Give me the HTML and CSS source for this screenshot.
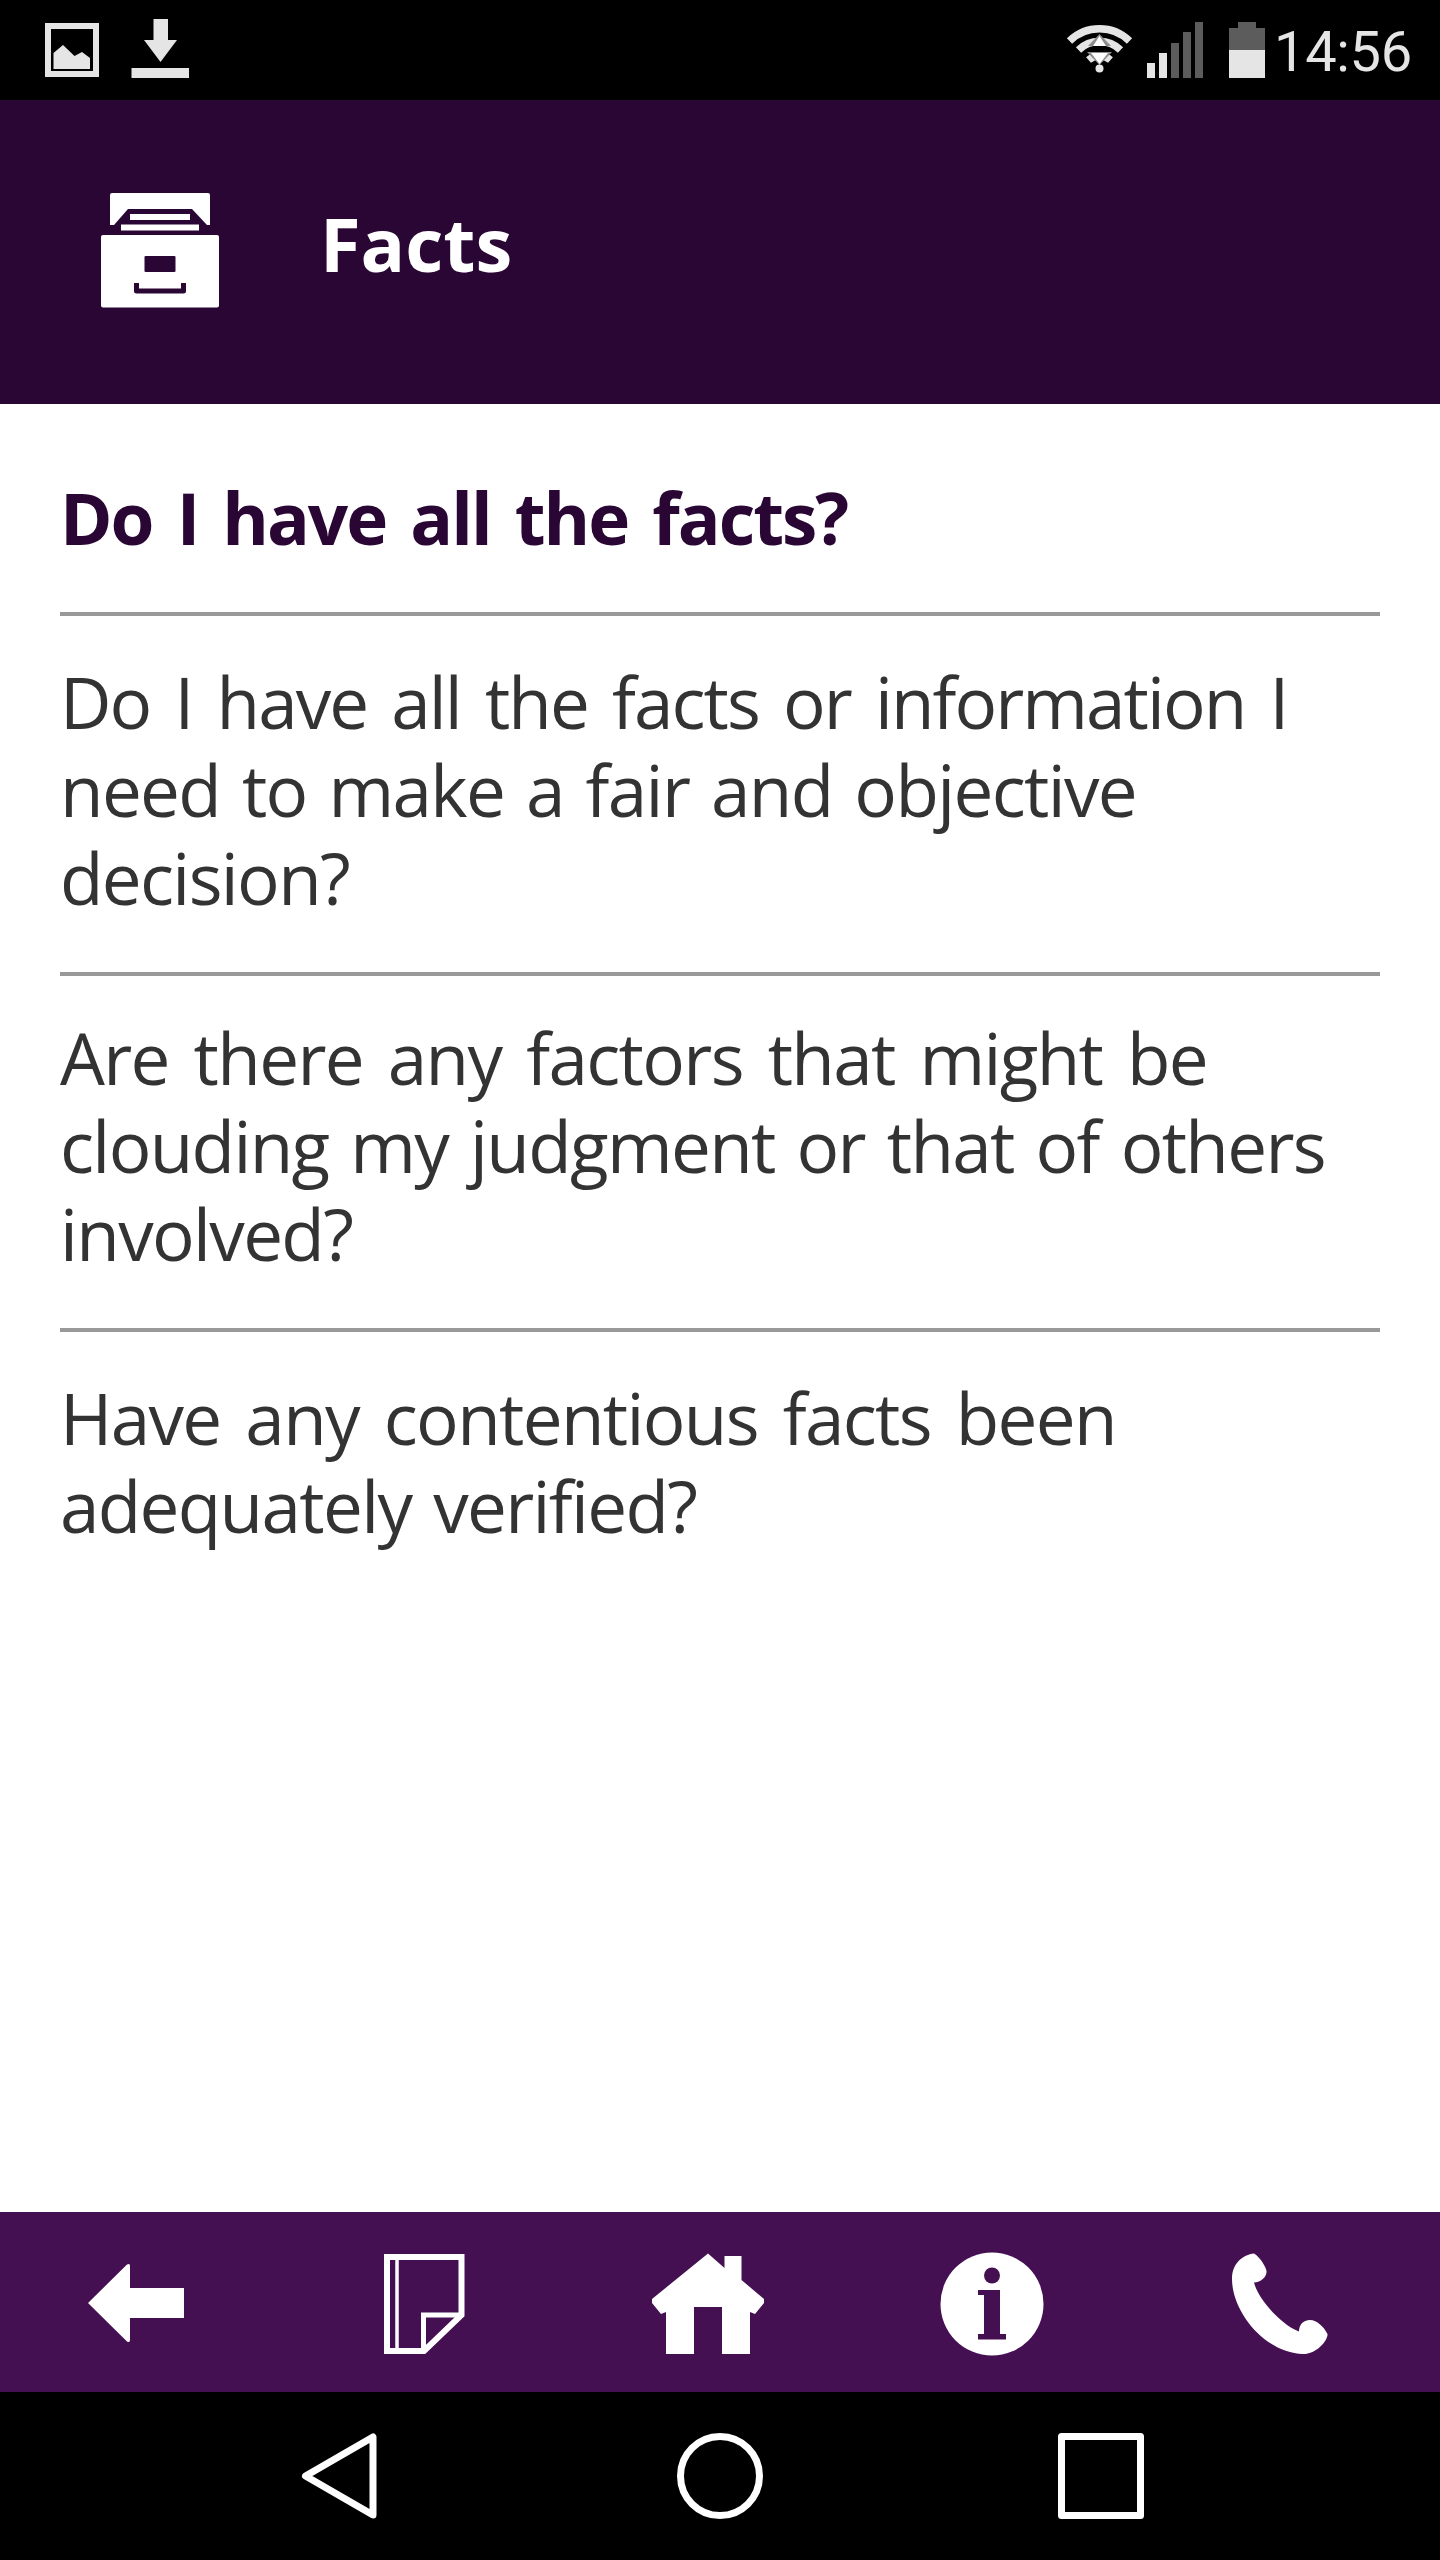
FILE: index.html
```html
<!DOCTYPE html>
<html lang="en">
<head>
    <meta charset="UTF-8">
    <meta name="viewport" content="width=device-width, initial-scale=1.0">
    <title>Facts</title>
    <link rel="stylesheet" href="styles.css">
</head>
<body>
    <div class="phone">
        <div class="status">
            <svg class="notify" width="150" height="100" viewBox="0 0 150 100">
                <path d="M3 26h48v48h-48z" fill="none" stroke="#e5e5e5" stroke-width="6"/>
                <path d="M8.500 69V53L18 45L29.500 56L37 52L45 58V69z" fill="#e5e5e5"/>
                <path d="M108.500 19H123V40H132L115.500 62L99 40H108.500zM86.500 68H144V78H86.500z" fill="#e5e5e5"/>
            </svg>
            <div class="right">
                <svg width="200" height="100" viewBox="0 0 200 100">
                    <!-- wifi -->
                    <g fill="none" stroke="#e5e5e5" stroke-width="7.500">
                        <path d="M4.500 41A43 43 0 0 1 64.500 41"/>
                        <path d="M13.500 50A30.500 30.500 0 0 1 55.500 50"/>
                        <path d="M23.500 60A17 17 0 0 1 45.500 60"/>
                    </g>
                    <path d="M23 46L34.500 34L46 46zM22 52H47L34.500 65z" fill="#8c8c8c"/>
                    <path d="M28 46L34.500 36L41 46zM26 53H43L34.500 64z" fill="#fff"/>
                    <circle cx="34.500" cy="68.500" r="4" fill="#e5e5e5"/>
                    <!-- signal -->
                    <path d="M82 63h8v15h-8zM94 53h8v25h-8z" fill="#e5e5e5"/>
                    <path d="M106 43h8v35h-8zM118 32h8v46h-8zM130 22h8v56h-8z" fill="#5c5c5c"/>
                    <!-- battery -->
                    <path d="M173 22h18v6h9v22h-36v-22h9z" fill="#5c5c5c"/>
                    <path d="M164 50h36v28h-36z" fill="#e5e5e5"/>
                </svg>
                <span class="time">14:56</span>
            </div>
        </div>

        <div class="header">
            <svg width="120" height="116" viewBox="0 0 120 116">
                <path d="M10 3q0-2 2-2h96q2 0 2 2v30h-3l-15-16H28L14 33h-4z" fill="#fff"/>
                <path d="M30 22h60v6H30zM21 32.500h78v6H21z" fill="#fff"/>
                <rect x="1" y="43" width="118" height="72.500" rx="2" fill="#fff"/>
                <rect x="44.500" y="64" width="31" height="16" rx="1" fill="#290633"/>
                <path d="M36.500 91v8h47v-8" fill="none" stroke="#290633" stroke-width="5" stroke-linejoin="round"/>
            </svg>
            <h1>Facts</h1>
        </div>

        <div class="content">
            <h2>Do I have all the facts?</h2>
            <p class="item"><span class="tight">Do I have all the facts or information I</span><br>need to make a fair and objective<br>decision?</p>
            <p class="item short"><span class="wide">Are there any factors that might be</span><br>clouding my judgment or that of others<br>involved?</p>
            <p class="item"><span class="wide">Have any contentious facts been</span><br>adequately verified?</p>
        </div>

        <div class="toolbar">
            <svg width="112" height="120" viewBox="0 0 112 120">
                <path d="M8 61L47 22.500q3-1.500 3 1V46h54v30H50v22q0 3-3 1.500z" fill="#fff"/>
            </svg>
            <svg width="112" height="120" viewBox="0 0 112 120">
                <path d="M21 15h74.500v58L58 109H21z" fill="none" stroke="#fff" stroke-width="6"/>
                <path d="M31 15v94" stroke="#fff" stroke-width="3.500"/>
                <path d="M57.500 107V73H94" fill="none" stroke="#fff" stroke-width="5"/>
            </svg>
            <svg width="112" height="120" viewBox="0 0 112 120">
                <path d="M56 11.500L72.500 26V14h17v24L112 57v4L103 72l-5-2v42H70V65H42v47H14V70l-5 2L0 61v-4z" fill="#fff"/>
            </svg>
            <svg width="112" height="120" viewBox="0 0 112 120">
                <circle cx="54" cy="62" r="51.500" fill="#fff"/>
                <g fill="#451052">
                    <circle cx="54" cy="33.500" r="8"/>
                    <rect x="40" y="48" width="22" height="5"/>
                    <rect x="46" y="48" width="16" height="49"/>
                    <rect x="40" y="92" width="28" height="5.500"/>
                </g>
            </svg>
            <svg width="112" height="120" viewBox="0 0 112 120">
                <path d="M30 11.500C36 15 42 25 42.500 29C43 35 37 40 30 40.500C33 54 54 81 75 89.500C75 83 79 78 86 78C93 78 100 85 103.500 92C104 98 93 112 79 112C41 111 8 70 8 37C8 21 19 13 30 11.500z" fill="#fff"/>
            </svg>
        </div>

        <div class="navbar">
            <svg width="88" height="88" viewBox="0 0 88 88">
                <path d="M77 5v78L9.500 44z" fill="none" stroke="#fff" stroke-width="7" stroke-linejoin="round"/>
            </svg>
            <svg width="88" height="88" viewBox="0 0 88 88">
                <circle cx="44" cy="44" r="39.500" fill="none" stroke="#fff" stroke-width="7"/>
            </svg>
            <svg width="88" height="88" viewBox="0 0 88 88">
                <rect x="5.500" y="4.500" width="79" height="79" fill="none" stroke="#fff" stroke-width="7" stroke-linejoin="round"/>
            </svg>
        </div>
    </div>
</body>
</html>
```
FILE: styles.css
```css
*{
    margin: 0;
    padding: 0;
    box-sizing: border-box;
}
body{
    font-family: "Open Sans", "Liberation Sans", sans-serif;
    background-color: #fff;
}
svg{
    display: block;
    flex-shrink: 0;
}
.phone{
    width: 1440px;
    height: 2560px;
    display: flex;
    flex-direction: column;
}
.status{
    height: 100px;
    padding: 0 28px 0 45px;
    background-color: #000;
    display: flex;
    justify-content: space-between;
}
.right{
    display: flex;
    gap: 9px;
}
.time{
    width: 138px;
    line-height: 104px;
    font-family: Roboto, sans-serif;
    font-size: 56px;
    letter-spacing: -0.3px;
    color: #e5e5e5;
    white-space: nowrap;
}
.header{
    height: 304px;
    padding: 92px 100px 0;
    background-color: #290633;
    display: flex;
    gap: 100px;
}
h1{
    font-size: 74px;
    line-height: 104px;
    color: #fff;
}
.content{
    flex: 1;
    padding: 0 60px;
}
h2{
    height: 208px;
    padding-top: 70px;
    font-size: 71px;
    line-height: 88px;
    letter-spacing: -2px;
    word-spacing: 7.7px;
    color: #290633;
    white-space: nowrap;
}
.item{
    height: 360px;
    padding-top: 42px;
    border-top: 4px solid #999;
    font-size: 71px;
    line-height: 88px;
    letter-spacing: -1.65px;
    word-spacing: 5px;
    color: #333;
    white-space: nowrap;
}
.wide{
    word-spacing: 8px;
}
.tight{
    letter-spacing: -1.95px;
    word-spacing: 7.7px;
}
.short{
    height: 356px;
    padding-top: 38px;
}
.toolbar{
    height: 180px;
    padding: 0 104px 0 80px;
    background-color: #451052;
    display: flex;
    justify-content: space-between;
    align-items: center;
}
.navbar{
    height: 168px;
    padding: 0 296px;
    background-color: #000;
    display: flex;
    justify-content: space-between;
    align-items: center;
}
```
